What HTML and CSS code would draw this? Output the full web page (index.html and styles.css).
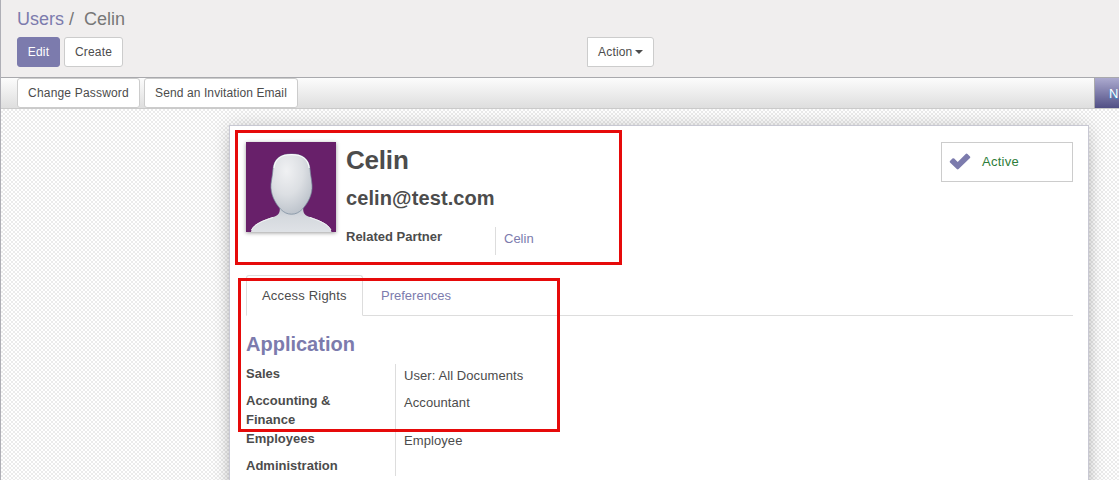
FILE: index.html
```html
<!DOCTYPE html>
<html lang="en">
<head>
<meta charset="utf-8">
<title>Users / Celin</title>
<link rel="stylesheet" href="styles.css">
</head>
<body>
<div class="app">
  <header class="control-panel">
    <div class="breadcrumb"><a class="crumb">Users</a><span class="slash">/</span><span>Celin</span></div>
    <div class="toolbar">
      <div class="buttons">
        <button class="btn btn-primary">Edit</button>
        <button class="btn btn-create">Create</button>
      </div>
      <button class="btn btn-action">Action <i class="caret"></i></button>
    </div>
  </header>
  <div class="statusbar">
    <div class="buttons">
      <button class="btn btn-password">Change Password</button>
      <button class="btn btn-invite">Send an Invitation Email</button>
    </div>
    <div class="stage">N</div>
  </div>
  <main class="form-area">
    <section class="sheet">
      <div class="profile">
        <svg class="avatar" width="90" height="90" viewBox="0 0 90 90">
          <defs>
            <radialGradient id="face" cx="0.38" cy="0.28" r="0.8">
              <stop offset="0" stop-color="#f0f1f3"/>
              <stop offset="0.5" stop-color="#dcdfe3"/>
              <stop offset="1" stop-color="#b7bec7"/>
            </radialGradient>
            <linearGradient id="body" x1="0" y1="0" x2="0" y2="1">
              <stop offset="0" stop-color="#bdc4cd"/>
              <stop offset="0.45" stop-color="#d5d9de"/>
              <stop offset="1" stop-color="#dfe2e6"/>
            </linearGradient>
          </defs>
          <rect width="90" height="90" fill="#68206a"/>
          <path d="M33.500 62C34.500 70 33.500 73 27 75C17 78 6 82 5 90H85.500C84.500 82 73 78 64 75C57.500 73 56.500 70 57.500 62Z" fill="url(#body)"/>
          <path d="M5.500 88C8 82 18 78.500 27 75.500M64 75.500C73 78.500 82 82 85 88" fill="none" stroke="#f3f4f6" stroke-width="1"/>
          <path d="M45.500 12C33 12 28 18 27 27C26.500 33 25.800 36 25 42C24.200 52 29 61 34.500 67C38 70.700 41.500 72.200 45.500 72.200C49.500 72.200 53 70.700 56.500 67C62 61 66.800 52 66 43C65.400 36 64.500 33 64 27C63 18 58 12 45.500 12Z" fill="url(#face)" stroke="#77889b" stroke-width=".7"/>
          <path d="M28 26C29 17 34 12.700 45.500 12.700C57 12.700 62 17 63.200 26" fill="none" stroke="#fafbfc" stroke-width="1.200"/>
        </svg>
        <div class="identity">
          <h1>Celin</h1>
          <h2>celin@test.com</h2>
          <div class="partner"><strong>Related Partner</strong><a class="partner-link">Celin</a></div>
        </div>
        <div class="stat-button">
          <svg class="check" width="22" height="18" viewBox="0 0 22 18"><path d="M1 9L3.400 6.500Q4.300 5.800 5.200 6.600L8.700 10L16.700 2Q17.600 1.200 18.500 2L21 4.500Q21.700 5.300 21 6.100L9.600 17.100Q8.700 17.800 7.800 17.100L1 10.600Q.3 9.800 1 9Z" fill="#7c7bad"/></svg>
          <span>Active</span>
        </div>
      </div>
      <nav class="tabs"><a class="tab tab-active">Access Rights</a><a class="tab">Preferences</a></nav>
      <h3>Application</h3>
      <dl class="fields">
        <dt>Sales</dt><dd>User: All Documents</dd>
        <dt>Accounting &amp; Finance</dt><dd>Accountant</dd>
        <dt>Employees</dt><dd>Employee</dd>
        <dt>Administration</dt><dd></dd>
      </dl>
    </section>
  </main>
  <div class="highlight highlight-profile"></div>
  <div class="highlight highlight-access"></div>
</div>
</body>
</html>
```
FILE: styles.css
```css
* { box-sizing: border-box; }
body { margin: 0; overflow: hidden; font: 13px/19px "Liberation Sans", Arial, sans-serif; color: #4c4c4c; }
.app { position: relative; width: 1119px; height: 480px; overflow: hidden; border-left: 1px solid #afafb6; display: flex; flex-direction: column; }
.control-panel { height: 78px; flex: none; padding: 8px 16px 0; background: #f0eeee; border-bottom: 1px solid #a9a9ad; }
.breadcrumb { display: flex; height: 29px; font-size: 18px; line-height: 22px; color: #777; }
.crumb { color: #7c7bad; }
.slash { width: 20px; padding-left: 5px; }
.toolbar, .buttons { display: flex; }
.buttons { gap: 4px; }
.btn { height: 30px; padding: 0 0 1px; border: 1px solid #ccc; border-radius: 3px; background: #fff; color: #4c4c4c; font: 12px/18px "Liberation Sans", Arial, sans-serif; letter-spacing: .18px; white-space: nowrap; }
.btn-primary { width: 43px; background: #7c7bad; border-color: #7c7bad; color: #fff; }
.btn-create { width: 59px; }
.btn-action { width: 67px; margin-left: 464px; border-radius: 0 3px 3px 0; }
.caret { display: inline-block; border: 4px solid transparent; border-top-color: #4c4c4c; border-bottom: 0; vertical-align: 2px; margin-left: -1px; }
.statusbar { height: 31px; flex: none; padding-left: 16px; display: flex; justify-content: space-between; background: linear-gradient(#fcfcfc, #dedede); border-bottom: 1px solid #cacaca; }
.btn-password { width: 123px; }
.btn-invite { width: 154px; letter-spacing: .1px; }
.stage { width: 25px; padding: 0 0 0 14px; white-space: nowrap; line-height: 32px; color: #fff; text-shadow: 0 1px 1px #2c9be0; background: linear-gradient(#acaacf, #514f85); border-left: 1px solid #aaa; }
.form-area { flex: 1; padding: 16px 30px 0 228px; background: repeating-conic-gradient(#ebebeb 0 25%, #fff 0 50%) 0 0 / 4px 4px; }
.sheet { width: 860px; height: 400px; padding: 16px 15px 0 16px; border: 1px solid #c8c8d3; background: #fff; box-shadow: 0 5px 20px -15px #000, 0 0 16px rgba(0,0,0,.16); }
.profile { height: 133px; display: flex; }
.avatar { flex: none; box-shadow: 0 1px 4px rgba(0,0,0,.4); }
.identity { margin-left: 10px; flex: 1; }
h1, h2, h3 { margin: 0; font-weight: bold; }
h1 { font-size: 26px; line-height: 36px; height: 42px; letter-spacing: -.2px; }
h2 { font-size: 20px; line-height: 28px; height: 43px; letter-spacing: .1px; }
.partner { display: flex; height: 28px; }
.partner strong { width: 149px; }
.partner-link { padding: 2px 0 0 8px; border-left: 1px solid #ddd; color: #7c7bad; }
.stat-button { width: 132px; height: 40px; padding: 0 0 2px 7px; display: flex; align-items: center; gap: 11px; border: 1px solid #ccc; color: #2e7d3a; letter-spacing: .25px; }
.tabs { height: 41px; display: flex; border-bottom: 1px solid #ddd; }
.tab { height: 41px; padding: 11px 18px; color: #7c7bad; }
.tab-active { width: 117px; padding: 10px 0 0 15px; border: 1px solid #ddd; border-bottom-color: #fff; border-radius: 3px 3px 0 0; background: #fff; color: #4c4c4c; white-space: nowrap; letter-spacing: .18px; }
h3 { height: 48px; padding-top: 15px; font-size: 20px; line-height: 26px; color: #7c7bad; }
.fields { margin: 0; display: grid; grid-template-columns: 149px 1fr; grid-template-rows: 27px 38px 27px 20px; }
dt { width: 110px; font-weight: bold; }
dd { margin: 0; padding: 2px 0 0 8px; border-left: 1px solid #ddd; letter-spacing: .08px; }
.highlight { position: absolute; border: 3px solid #e60a0a; }
.highlight-profile { left: 234px; top: 130px; width: 387px; height: 135px; }
.highlight-access { left: 237px; top: 278px; width: 322px; height: 154px; }
.check { flex: none; }
```
